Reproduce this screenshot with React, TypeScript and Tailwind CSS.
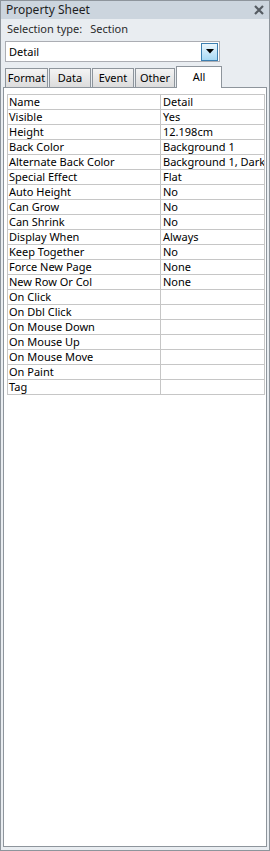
import React from "react";

const rows: [string, string][] = [
  ["Name", "Detail"],
  ["Visible", "Yes"],
  ["Height", "12.198cm"],
  ["Back Color", "Background 1"],
  ["Alternate Back Color", "Background 1, Darker 5%"],
  ["Special Effect", "Flat"],
  ["Auto Height", "No"],
  ["Can Grow", "No"],
  ["Can Shrink", "No"],
  ["Display When", "Always"],
  ["Keep Together", "No"],
  ["Force New Page", "None"],
  ["New Row Or Col", "None"],
  ["On Click", ""],
  ["On Dbl Click", ""],
  ["On Mouse Down", ""],
  ["On Mouse Up", ""],
  ["On Mouse Move", ""],
  ["On Paint", ""],
  ["Tag", ""],
];

const tabs: [string, string][] = [
  ["Format", "w-[43px]"],
  ["Data", "w-[42px]"],
  ["Event", "w-[42px]"],
  ["Other", "w-[40px]"],
];

export default function App() {
  return (
    <div
      className="flex h-[851px] w-[270px] flex-col border border-[#8e959c] bg-[#e9edf1] text-[11px] leading-[14px] text-black"
      style={{ fontFamily: '"Noto Sans", "Liberation Sans", sans-serif' }}
    >
      {/* title bar */}
      <div className="flex h-[18px] items-center justify-between bg-[#ccd5de] pl-[5px] pr-[5px] text-[12px] text-[#1e1e1e]">
        <span>Property Sheet</span>
        <svg width="10" height="10" viewBox="0 0 10 10">
          <path d="M1 1 L9 9 M9 1 L1 9" stroke="#555b62" strokeWidth="2.2" />
        </svg>
      </div>

      <div className="flex h-[20px] items-center pl-[6px] text-[#2b2b2b]">
        <span>Selection type:</span>
        <span className="ml-[8px]">Section</span>
      </div>

      {/* combo */}
      <div className="ml-[4px] mt-[2px] flex h-[21px] w-[215px] items-center justify-between border border-[#abadb3] bg-white pl-[3px] pr-[1px]">
        <span>Detail</span>
        <div className="flex h-[18px] w-[17px] items-center justify-center border border-[#3c7fb1] bg-gradient-to-b from-[#eaf6fd] to-[#a7d9f5]">
          <svg width="8" height="5" viewBox="0 0 8 5">
            <path d="M0 0 H8 L4 4.5 Z" fill="#000" />
          </svg>
        </div>
      </div>

      {/* tabs */}
      <div className="relative z-10 ml-[4px] mt-[4px] flex h-[21px] items-end">
        {tabs.map(([t, w]) => (
          <div
            key={t}
            className={`${w} mr-[1px] flex h-[19px] items-center justify-center border border-b-0 border-[#8e959c] bg-gradient-to-b from-[#f4f4f4] to-[#dcdcdc]`}
          >
            {t}
          </div>
        ))}
        <div className="-mb-[1px] flex h-[22px] w-[46px] items-start justify-center border border-b-0 border-[#8e959c] bg-white pt-[3px]">
          All
        </div>
      </div>

      {/* panel */}
      <div className="mx-[2px] mb-[3px] flex-1 border border-[#8e959c] bg-white pl-[3px] pr-[1px] pt-[6px]">
        <div className="overflow-hidden border-r border-[#c6c6c6]">
          <div className="w-[300px] border-l border-t border-[#c6c6c6]">
            {rows.map(([k, v]) => (
              <div key={k} className="flex h-[15px] border-b border-[#c6c6c6]">
                <div className="w-[153px] shrink-0 overflow-hidden whitespace-nowrap border-r border-[#c6c6c6] pl-[1px]">
                  {k}
                </div>
                <div className="flex-1 overflow-hidden whitespace-nowrap pl-[2px]">{v}</div>
              </div>
            ))}
          </div>
        </div>
      </div>
    </div>
  );
}
